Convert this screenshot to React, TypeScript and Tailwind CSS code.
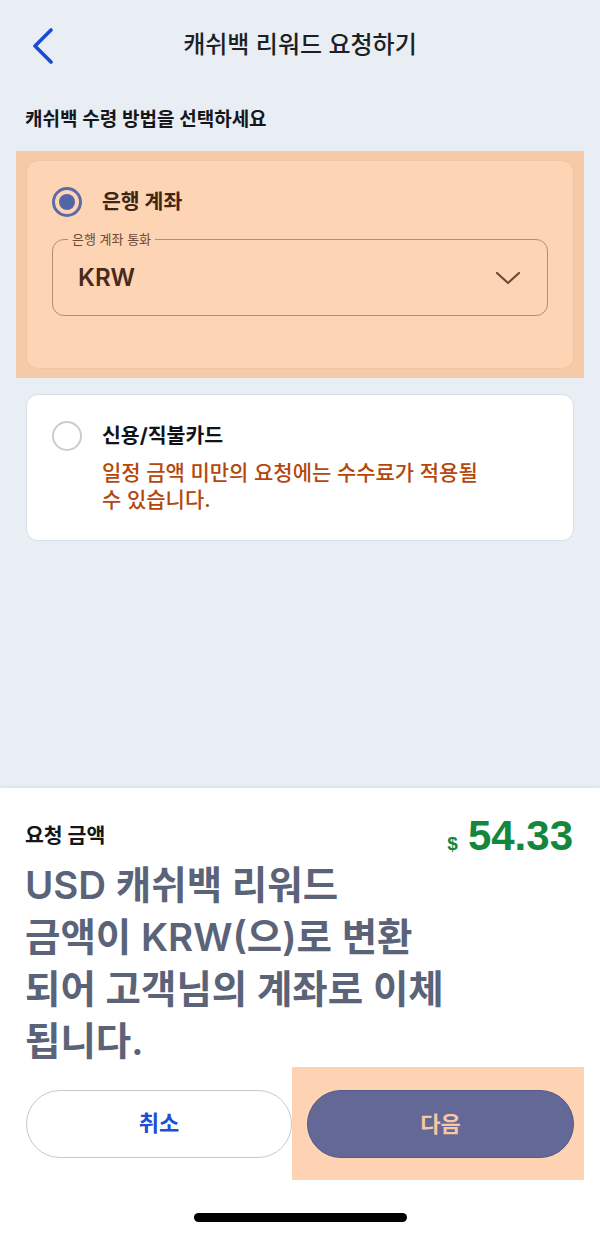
import React from "react";

const KR = "font-['Inter','Noto_Sans_CJK_KR',sans-serif]";

export default function App() {
  return (
    <div className={`flex min-h-[1235px] w-[600px] flex-col bg-[#e9edf4] ${KR}`}>
      {/* top area */}
      <div className="flex flex-1 flex-col">
        {/* header */}
        <div className="grid h-[90px] grid-cols-[80px_1fr_80px] items-center">
          <div className="pl-[31px] pt-[2px]">
            <svg width="24" height="36" viewBox="0 0 24 36" fill="none">
              <polyline
                points="20,2 4,18 20,34"
                stroke="#1a4bd6"
                strokeWidth="3.6"
                strokeLinecap="round"
                strokeLinejoin="round"
              />
            </svg>
          </div>
          <div className="text-center text-[24px] font-medium text-[#1c1f24]">
            캐쉬백 리워드 요청하기
          </div>
          <div />
        </div>

        {/* section label */}
        <div className="mt-[15px] h-[30px] px-[25px] text-[19px] font-semibold leading-[30px] text-[#15171b]">
          캐쉬백 수령 방법을 선택하세요
        </div>

        {/* highlighted first card */}
        <div className="mx-[16px] mt-[16px] bg-[#f4caa9] px-[10px] py-[9px]">
          <div className="rounded-[12px] border border-[#f1c4a2] bg-[#fdd4b4] px-[25px] pb-[52px] pt-[26px]">
            <div className="flex h-[30px] items-center gap-[20px]">
              <div className="flex h-[30px] w-[30px] items-center justify-center rounded-full border-[3px] border-[#5c6aa6]">
                <div className="h-[16px] w-[16px] rounded-full bg-[#5465a6]" />
              </div>
              <div className="text-[20.5px] font-bold text-[#3f2516]">은행 계좌</div>
            </div>
            <div className="relative mt-[22px] flex h-[77px] items-center justify-between rounded-[12px] border-[1.5px] border-[#b48c74] pl-[25px] pr-[26px]">
              <div className="absolute left-[15px] top-[-9px] bg-[#fdd4b4] px-[4px] text-[13px] leading-[16px] text-[#6e4a36]">
                은행 계좌 통화
              </div>
              <div className="text-[24px] font-semibold text-[#4a2a1a]">KRW</div>
              <svg width="26" height="16" viewBox="0 0 26 16" fill="none">
                <polyline
                  points="2,3 13,13 24,3"
                  stroke="#6e4a38"
                  strokeWidth="2.2"
                  strokeLinecap="round"
                  strokeLinejoin="round"
                />
              </svg>
            </div>
          </div>
        </div>

        {/* second card */}
        <div className="mx-[26px] mt-[16px] rounded-[12px] border border-[#d9dee8] bg-white px-[25px] pb-[27px] pt-[26px]">
          <div className="flex items-start gap-[20px]">
            <div className="h-[30px] w-[30px] shrink-0 rounded-full border-[2.5px] border-[#c9ccd2]" />
            <div className="flex flex-col">
              <div className="text-[20.5px] font-bold leading-[30px] text-[#111318]">
                신용/직불카드
              </div>
              <div className="mt-[8px] text-[21px] font-medium leading-[27px] text-[#b5470c]">
                일정 금액 미만의 요청에는 수수료가 적용될
                <br />수 있습니다.
              </div>
            </div>
          </div>
        </div>
      </div>

      {/* bottom sheet */}
      <div className="flex h-[447px] flex-col bg-white pt-[26px] shadow-[0_-1px_3px_rgba(0,0,0,0.07)]">
        <div className="flex h-[44px] items-center justify-between pl-[25px] pr-[27px]">
          <div className="text-[20.5px] font-bold text-[#141619]">요청 금액</div>
          <div className="flex items-baseline gap-[10px] font-['Liberation_Sans',sans-serif] font-bold text-[#13873d]">
            <span className="text-[19px]">$</span>
            <span className="text-[42px] leading-[44px]">54.33</span>
          </div>
        </div>
        <div className="mt-[1px] px-[25px] text-[38.5px] font-semibold leading-[52px] text-[#5a6378]">
          <div>USD 캐쉬백 리워드</div>
          <div>금액이 KRW(으)로 변환</div>
          <div>되어 고객님의 계좌로 이체</div>
          <div>됩니다.</div>
        </div>
        <div className="flex pl-[26px]">
          <div className="flex items-center">
            <button className="h-[68px] w-[266px] rounded-full border-[1.5px] border-[#c8c8c8] bg-white text-[22px] font-bold text-[#1d4fd2]">
              취소
            </button>
          </div>
          <div className="w-[292px] bg-[#fdd3b3] pb-[22px] pl-[15px] pr-[10px] pt-[23px]">
            <button className="h-[68px] w-[267px] rounded-full border border-[#545987] bg-[#636897] text-[22px] font-semibold text-[#f8c7a3]">
              다음
            </button>
          </div>
        </div>
        <div className="mt-[33px] flex justify-center">
          <div className="h-[9px] w-[213px] rounded-full bg-black" />
        </div>
      </div>
    </div>
  );
}
